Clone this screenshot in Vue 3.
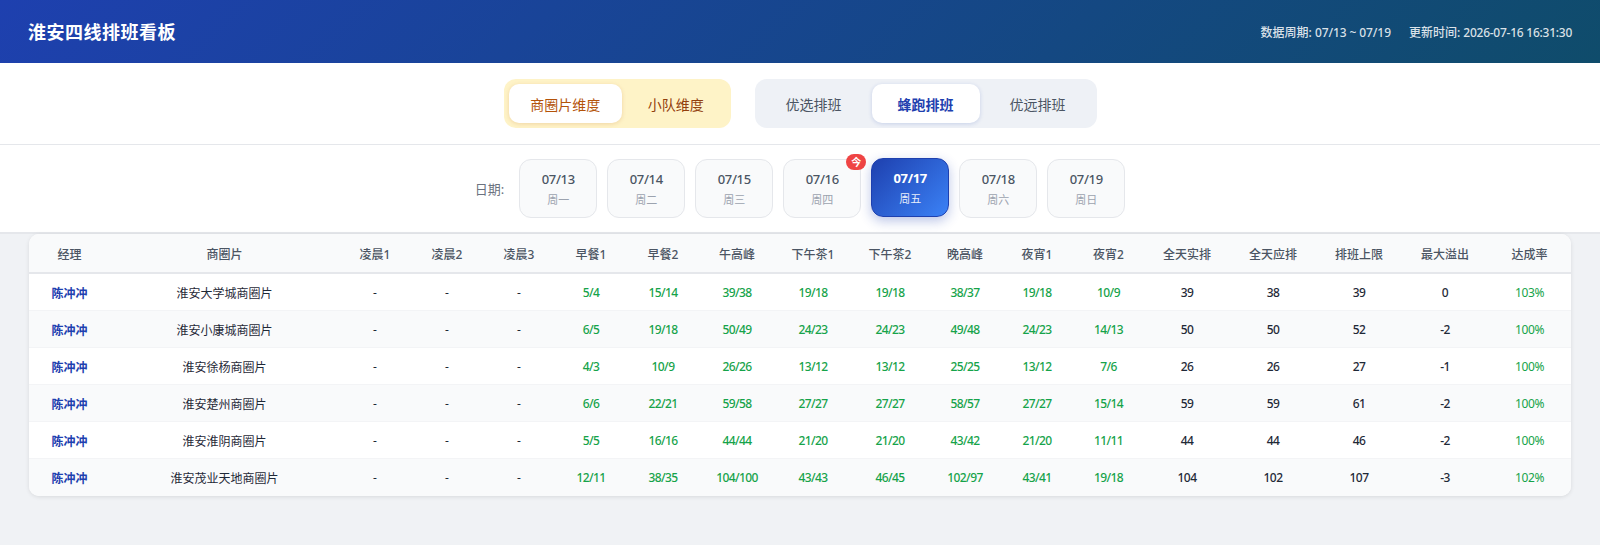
<template>
  <div class="page">
    <header class="top-bar">
      <h1>淮安四线排班看板</h1>
      <div class="top-meta">
        <span>数据周期: <i>07/13 ~ 07/19</i></span>
        <span>更新时间: <i class="tight">2026-07-16 16:31:30</i></span>
      </div>
    </header>

    <div class="toolbar">
      <div class="switch switch-dim">
        <button v-for="d in dims" :key="d" :class="{ on: d === '商圈片维度' }">{{ d }}</button>
      </div>
      <div class="switch switch-plan">
        <button v-for="p in plans" :key="p" :class="{ on: p === '蜂跑排班' }">{{ p }}</button>
      </div>
    </div>

    <div class="date-bar">
      <span class="date-label">日期:</span>
      <div class="date-list">
        <div
          v-for="d in days"
          :key="d.date"
          class="date-card"
          :class="{ active: d.date === '07/17' }"
        >
          <span v-if="d.today" class="today">今</span>
          <strong>{{ d.date }}</strong>
          <small>{{ d.week }}</small>
        </div>
      </div>
    </div>

    <main class="content">
      <div class="table-card">
        <table>
          <colgroup>
            <col v-for="(w, i) in widths" :key="i" :style="{ width: w + 'px' }" />
          </colgroup>
          <thead>
            <tr>
              <th v-for="c in columns" :key="c">{{ c }}</th>
            </tr>
          </thead>
          <tbody>
            <tr v-for="r in rows" :key="r.name">
              <td class="manager">陈冲冲</td>
              <td class="store">{{ r.name }}</td>
              <td v-for="n in 3" :key="n" class="empty">-</td>
              <td v-for="(s, i) in r.slots" :key="i" class="slot">{{ s }}</td>
              <td v-for="(v, i) in r.totals" :key="'t' + i" class="num">{{ v }}</td>
              <td class="rate">{{ r.rate }}</td>
            </tr>
          </tbody>
        </table>
      </div>
    </main>
  </div>
</template>

<script setup>
const dims = ["商圈片维度", "小队维度"];
const plans = ["优选排班", "蜂跑排班", "优远排班"];

const days = [
  { date: "07/13", week: "周一" },
  { date: "07/14", week: "周二" },
  { date: "07/15", week: "周三" },
  { date: "07/16", week: "周四", today: true },
  { date: "07/17", week: "周五" },
  { date: "07/18", week: "周六" },
  { date: "07/19", week: "周日" }
];

const widths = [81, 229, 72, 72, 72, 72, 72, 76, 76, 78, 72, 72, 71, 86, 86, 86, 86, 83];

const columns = [
  "经理", "商圈片", "凌晨1", "凌晨2", "凌晨3", "早餐1", "早餐2", "午高峰", "下午茶1",
  "下午茶2", "晚高峰", "夜宵1", "夜宵2", "全天实排", "全天应排", "排班上限", "最大溢出", "达成率"
];

const rows = [
  { name: "淮安大学城商圈片", slots: ["5/4", "15/14", "39/38", "19/18", "19/18", "38/37", "19/18", "10/9"], totals: [39, 38, 39, 0], rate: "103%" },
  { name: "淮安小康城商圈片", slots: ["6/5", "19/18", "50/49", "24/23", "24/23", "49/48", "24/23", "14/13"], totals: [50, 50, 52, -2], rate: "100%" },
  { name: "淮安徐杨商圈片", slots: ["4/3", "10/9", "26/26", "13/12", "13/12", "25/25", "13/12", "7/6"], totals: [26, 26, 27, -1], rate: "100%" },
  { name: "淮安楚州商圈片", slots: ["6/6", "22/21", "59/58", "27/27", "27/27", "58/57", "27/27", "15/14"], totals: [59, 59, 61, -2], rate: "100%" },
  { name: "淮安淮阴商圈片", slots: ["5/5", "16/16", "44/44", "21/20", "21/20", "43/42", "21/20", "11/11"], totals: [44, 44, 46, -2], rate: "100%" },
  { name: "淮安茂业天地商圈片", slots: ["12/11", "38/35", "104/100", "43/43", "46/45", "102/97", "43/41", "19/18"], totals: [104, 102, 107, -3], rate: "102%" }
];
</script>

<style>
body {
  margin: 0;
  background: #f0f2f5;
}
</style>

<style scoped>
.page {
  min-height: 545px;
  background: #f0f2f5;
  font-family: "Noto Sans", "Noto Sans CJK SC", sans-serif;
}

.top-bar {
  height: 63px;
  box-sizing: border-box;
  padding: 0 28px;
  display: flex;
  align-items: center;
  justify-content: space-between;
  background: linear-gradient(135deg, #1e40af 0%, #0f4c6b 100%);
  color: #fff;
}

.top-bar h1 {
  margin: 0;
  font-size: 18px;
  line-height: 1;
  font-weight: 700;
  letter-spacing: 0.5px;
}

.top-meta {
  display: flex;
  gap: 18px;
  font-size: 12px;
  font-weight: 500;
  color: rgba(255, 255, 255, 0.85);
}

.top-meta i {
  font-style: normal;
  letter-spacing: -0.1px;
}

.top-meta i.tight {
  letter-spacing: -0.25px;
}

.toolbar {
  display: flex;
  justify-content: center;
  gap: 24px;
  padding: 16px 0;
  background: #fff;
  border-bottom: 1px solid #e5e7eb;
}

.switch {
  display: flex;
  gap: 4px;
  padding: 5px;
  border-radius: 12px;
}

.switch button {
  height: 39px;
  border: 0;
  border-radius: 10px;
  background: transparent;
  font: inherit;
  font-size: 14px;
  cursor: pointer;
}

.switch-dim {
  background: #fef3c7;
}

.switch-dim button {
  padding: 0 21.75px;
  color: #92400e;
}

.switch-dim button.on {
  background: #fff;
  color: #b45309;
  box-shadow: 0 1px 4px rgba(180, 83, 9, 0.18);
}

.switch-plan {
  background: #eef1f6;
}

.switch-plan button {
  width: 108px;
  padding: 0;
  color: #4b5563;
}

.switch-plan button.on {
  background: #fff;
  color: #1e40af;
  font-weight: 700;
  box-shadow: 0 1px 4px rgba(30, 64, 175, 0.18);
}

.date-bar {
  display: flex;
  align-items: center;
  justify-content: center;
  gap: 15px;
  padding: 14px 0;
  background: #fff;
  border-bottom: 2px solid #e5e7eb;
}

.date-label {
  font-size: 13px;
  color: #6b7280;
}

.date-list {
  display: flex;
  gap: 10px;
}

.date-card {
  position: relative;
  width: 78px;
  height: 59px;
  box-sizing: border-box;
  display: flex;
  flex-direction: column;
  align-items: center;
  justify-content: center;
  gap: 4px;
  padding-top: 1px;
  border: 1px solid #e5e7eb;
  border-radius: 12px;
  background: #f9fafb;
}

.date-card strong {
  font-size: 13px;
  line-height: 18px;
  font-weight: 500;
  letter-spacing: -0.35px;
  color: #4b5563;
}

.date-card small {
  font-size: 11px;
  line-height: 16px;
  color: #9ca3af;
}

.date-card.active {
  transform: translateY(-1px);
  border-color: #1e40af;
  background: linear-gradient(135deg, #1e40af 0%, #3b82f6 100%);
  box-shadow: 0 4px 12px rgba(30, 64, 175, 0.3);
}

.date-card.active strong {
  color: #fff;
  font-weight: 700;
}

.date-card.active small {
  color: rgba(255, 255, 255, 0.9);
}

.today {
  position: absolute;
  top: -6px;
  right: -6px;
  width: 20px;
  height: 16px;
  border-radius: 8px;
  background: #ef4444;
  color: #fff;
  font-size: 10px;
  line-height: 16px;
  font-weight: 700;
  text-align: center;
}

.content {
  padding: 0 29px;
}

.table-card {
  border-radius: 10px;
  overflow: hidden;
  background: #fff;
  box-shadow: 0 1px 4px rgba(0, 0, 0, 0.1);
}

table {
  width: 100%;
  table-layout: fixed;
  border-collapse: separate;
  border-spacing: 0;
  font-size: 12px;
  text-align: center;
}

th {
  height: 40px;
  box-sizing: border-box;
  padding: 1px 0 0;
  background: #f9fafb;
  border-bottom: 2px solid #e5e7eb;
  color: #4b5563;
  font-weight: 500;
}

td {
  height: 37px;
  box-sizing: border-box;
  padding: 1px 0 0;
  border-bottom: 1px solid #f3f4f6;
  color: #1f2937;
}

tbody tr:last-child td {
  border-bottom-color: transparent;
}

tbody tr:nth-child(even) {
  background: #f9fafb;
}

td.manager {
  color: #1e40af;
  font-weight: 700;
}

td.slot {
  color: #16a34a;
  font-weight: 500;
  letter-spacing: -0.6px;
}

td.num {
  font-weight: 500;
  letter-spacing: -0.5px;
}

td.rate {
  color: #16a34a;
  letter-spacing: -0.4px;
}
</style>
